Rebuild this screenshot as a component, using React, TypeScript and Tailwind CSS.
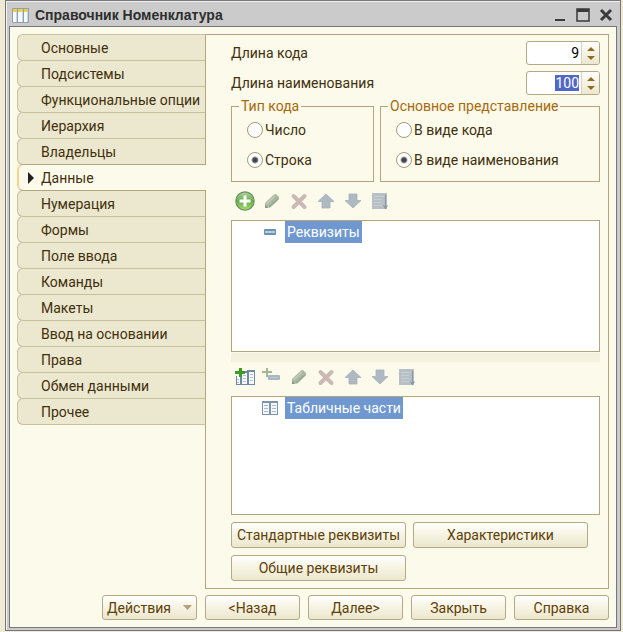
import React from "react";
import clsx from "clsx";

const tabs = [
    "Основные",
    "Подсистемы",
    "Функциональные опции",
    "Иерархия",
    "Владельцы",
    "Данные",
    "Нумерация",
    "Формы",
    "Поле ввода",
    "Команды",
    "Макеты",
    "Ввод на основании",
    "Права",
    "Обмен данными",
    "Прочее",
];

function WindowIcon() {
    return (
        <svg width="17" height="15" viewBox="0 0 17 15">
            <rect width="17" height="15" rx="1" fill="#8fa1ae" />
            <path d="M1 4h4v10H1zM6 4h5v10H6zM12 4h4v10h-4z" fill="#f7fafc" />
            <path d="M1 1h4v3H1zM6 1h5v3H6zM12 1h4v3h-4z" fill="#efcd4c" />
            <path d="M4 4h1v10H4zM10 4h1v10h-1zM15 4h1v10h-1z" fill="#c3dae6" />
        </svg>
    );
}

function AddIcon() {
    return (
        <svg width="20" height="20" viewBox="0 0 20 20">
            <defs>
                <linearGradient id="green" x1="0" y1="0" x2="0" y2="1">
                    <stop offset="0" stopColor="#b4d3a4" />
                    <stop offset="0.5" stopColor="#66ae4b" />
                    <stop offset="1" stopColor="#a4e070" />
                </linearGradient>
            </defs>
            <circle cx="10" cy="10" r="9.2" fill="url(#green)" stroke="#728f66" strokeWidth="1.2" />
            <path d="M8.5 4.5h3v4h4v3h-4v4h-3v-4h-4v-3h4z" fill="#fff" />
        </svg>
    );
}

function PencilIcon() {
    return (
        <svg width="20" height="20" viewBox="0 0 20 20">
            <path d="M3 17v-5l9-8.500 2-.5 3 3v2l-9 8.500z" fill="#a9b8a0" />
            <path d="M4.500 13l8.500-8" stroke="#c3cdbb" strokeWidth="1.5" />
            <path d="M7.500 16l8.500-8" stroke="#93a88b" strokeWidth="1.5" />
            <path d="M3 14v3h3z" fill="#8b9484" />
        </svg>
    );
}

function DeleteIcon() {
    return (
        <svg width="20" height="20" viewBox="0 0 20 20">
            <path d="M4.500 5l11 11M15.500 5l-11 11" stroke="#cbb9b5" strokeWidth="4" strokeLinecap="round" />
        </svg>
    );
}

function ArrowIcon({ down }: { down?: boolean }) {
    return (
        <svg width="20" height="20" viewBox="0 0 20 20" className={clsx(down && "rotate-180")}>
            <path d="M10 3l8 7.500h-4V17H6v-6.500H2z" fill="#aeb9c1" stroke="#a5b1ba" strokeWidth="0.8" strokeLinejoin="round" />
        </svg>
    );
}

function SortIcon() {
    return (
        <svg width="20" height="20" viewBox="0 0 20 20">
            <rect x="2" y="2" width="15" height="16" fill="#b7c0c6" />
            <path d="M4 5.500h10M4 8.500h8M4 11.500h8M4 14.500h8" stroke="#c7cdd0" />
            <path d="M15.500 4v13M13.500 14.500l2 3 2-3" stroke="#8c98a2" strokeWidth="1.200" fill="none" />
        </svg>
    );
}

function AddTableIcon() {
    return (
        <svg width="20" height="20" viewBox="0 0 20 20">
            <path d="M1 9h5v9H1zM6 4h7v14H6zM12 3h8v15h-8z" fill="#7089a8" />
            <path d="M2 9h3v8H2zM7 6h5v11H7zM14 5h5v12h-5z" fill="#f5f8fb" />
            <path d="M8 8.500h3M8 11.500h3M8 14.500h3M15 7.500h3M15 10.500h3M15 13.500h3M2 12.500h2M2 15.500h2" stroke="#b4c2d1" />
            <path d="M4 1h3v3h3v3H7v3H4V7H0V4h4z" fill="#3f9c26" />
        </svg>
    );
}

function AddFieldIcon() {
    return (
        <svg width="20" height="20" viewBox="0 0 20 20">
            <path d="M4 1h2v3h4v2H6v4H4V6H0V4h4z" fill="#a3b597" />
            <rect x="6" y="8" width="12" height="5" rx="1" fill="#a9b7c2" />
            <path d="M8 10.500h8" stroke="#bac6ce" />
        </svg>
    );
}

function FieldIcon() {
    return (
        <svg width="16" height="16" viewBox="0 0 16 16">
            <rect x="2" y="5" width="12" height="6" rx="1" fill="#6c93b3" />
            <rect x="3" y="7" width="10" height="2" fill="#b4d0e0" />
        </svg>
    );
}

function TableIcon() {
    return (
        <svg width="16" height="16" viewBox="0 0 16 16">
            <rect y="1" width="16" height="14" fill="#7f93ae" />
            <path d="M1 3h6v11H1zM9 3h6v11H9z" fill="#f4f7fb" />
            <path d="M2 5.500h4M2 8.500h4M2 11.500h4M10 5.500h4M10 8.500h4M10 11.500h4" stroke="#abb9c9" />
        </svg>
    );
}

const commonTools = [
    { label: "Изменить", icon: <PencilIcon /> },
    { label: "Удалить", icon: <DeleteIcon /> },
    { label: "Переместить вверх", icon: <ArrowIcon /> },
    { label: "Переместить вниз", icon: <ArrowIcon down /> },
    { label: "Упорядочить", icon: <SortIcon /> },
];

function Toolbar({ tools }: { tools: { label: string; icon: React.ReactNode }[] }) {
    return (
        <div className="flex h-5 gap-[7px] pl-1">
            {tools.map((tool) => (
                <button key={tool.label} type="button" aria-label={tool.label}>
                    {tool.icon}
                </button>
            ))}
        </div>
    );
}

function Button({ children, className }: { children: React.ReactNode; className?: string }) {
    return (
        <button
            type="button"
            className={clsx(
                "flex items-center justify-center rounded-[3px] border border-[#b3a986] bg-linear-to-b from-white via-[#f6f3e2] to-[#ebe7ce] text-[#5e4008]",
                className
            )}
        >
            {children}
        </button>
    );
}

function NumberField({ id, label, value, selected }: { id: string; label: string; value: string; selected?: boolean }) {
    return (
        <div className="flex h-6 items-center justify-between">
            <label htmlFor={id}>{label}</label>
            <div className="flex h-6 w-[74px] overflow-hidden rounded-[3px] border border-[#b3a986] bg-white">
                <div className="flex min-w-0 flex-1 items-center justify-end pr-[2px]">
                    <input
                        id={id}
                        type="text"
                        defaultValue={value}
                        className={clsx(
                            "h-4 min-w-0 text-right leading-4 outline-none",
                            selected ? "w-6 bg-[#5068c4] text-white" : "w-full text-black"
                        )}
                    />
                </div>
                <div className="flex w-[18px] flex-col items-center justify-center gap-[5px] border-l border-[#d9d3b8] bg-linear-to-b from-white to-[#ebe7ce]">
                    <button type="button" aria-label="Увеличить">
                        <svg width="8" height="4" viewBox="0 0 8 4" className="block">
                            <path d="M4 0l4 4H0z" fill="#8f6d1c" />
                        </svg>
                    </button>
                    <button type="button" aria-label="Уменьшить">
                        <svg width="8" height="4" viewBox="0 0 8 4" className="block">
                            <path d="M4 4L0 0h8z" fill="#8f6d1c" />
                        </svg>
                    </button>
                </div>
            </div>
        </div>
    );
}

function RadioGroup({
    name,
    title,
    options,
    selected,
    className,
}: {
    name: string;
    title: string;
    options: string[];
    selected: string;
    className: string;
}) {
    return (
        <fieldset className={clsx("h-[84px] border border-[#b3a67c] px-[7px] pb-[11px]", className)}>
            <legend className="px-[2px] leading-4 text-[#a8690c]">{title}</legend>
            <div className="flex flex-col gap-[14px] pt-2 pl-2">
                {options.map((option) => (
                    <label key={option} className="flex h-4 items-center gap-[2px]">
                        <input
                            type="radio"
                            name={name}
                            defaultChecked={option === selected}
                            className="size-4 appearance-none rounded-full border border-[#a39b78] bg-white checked:bg-[radial-gradient(circle,#444_0_2px,#fff_4px)]"
                        />
                        {option}
                    </label>
                ))}
            </div>
        </fieldset>
    );
}

function TreeBox({ icon, label, className }: { icon: React.ReactNode; label: string; className: string }) {
    return (
        <div className={clsx("border border-[#b3a67c] bg-white pl-[30px]", className)}>
            <div className="flex items-center gap-[7px]">
                {icon}
                <span className="h-[22px] bg-[#6f98d0] px-[2px] leading-[22px] text-white">{label}</span>
            </div>
        </div>
    );
}

function App() {
    return (
        <div className="flex min-h-screen bg-[#eeead4] pr-[2px] pb-px pl-[5px] font-['Roboto',sans-serif] text-[14px] leading-4 text-[#41300c]">
            <div className="flex flex-1 flex-col border border-[#77777b] bg-[#cbcbcb] px-[3px] pb-[2px] shadow-[inset_1px_1px_#f0f0f0]">
                <header className="flex h-[25px] items-center pt-[3px] pr-1 pl-[3px]">
                    <WindowIcon />
                    <h1 className="flex-1 pl-[6px] font-['Liberation_Sans',sans-serif] font-bold text-[#2e2e2e]">
                        Справочник Номенклатура
                    </h1>
                    <div className="flex gap-[9px]">
                        <button type="button" aria-label="Свернуть">
                            <svg width="14" height="14" viewBox="0 0 14 14">
                                <path d="M2 11h10v2H2z" fill="#3a3a3a" />
                            </svg>
                        </button>
                        <button type="button" aria-label="Развернуть">
                            <svg width="14" height="14" viewBox="0 0 14 14">
                                <path d="M1 1h12v12H1z" fill="none" stroke="#3a3a3a" strokeWidth="1.500" />
                                <path d="M1 1h12v3H1z" fill="#3a3a3a" />
                            </svg>
                        </button>
                        <button type="button" aria-label="Закрыть окно">
                            <svg width="14" height="14" viewBox="0 0 14 14">
                                <path d="M2 2l10 10M12 2L2 12" stroke="#3a3a3a" strokeWidth="3" />
                            </svg>
                        </button>
                    </div>
                </header>

                <main className="flex flex-1 flex-col border border-[#77777b] bg-[#fcfaeb] px-[7px] pt-[7px] pb-[7px]">
                    <div className="flex flex-1">
                        <nav className="z-10 -mr-px flex w-[189px] flex-col">
                            {tabs.map((tab) => {
                                const active = tab === "Данные";
                                return (
                                    <button
                                        key={tab}
                                        type="button"
                                        className={clsx(
                                            "-mb-px flex h-[27px] items-center rounded-l-md border text-left",
                                            active
                                                ? "z-10 border-y-[#b3a67c] border-r-0 border-l-2 border-l-[#f3d391] bg-[#fcfaeb] pl-2"
                                                : "border-[#c9c09d] border-r-[#b3a67c] bg-[#ece7cf] pl-[23px]"
                                        )}
                                    >
                                        {active && (
                                            <svg width="7" height="12" viewBox="0 0 7 12" className="mr-[7px]">
                                                <path d="M1 0l6 6-6 6z" fill="#222" />
                                            </svg>
                                        )}
                                        {tab}
                                    </button>
                                );
                            })}
                        </nav>

                        <section className="flex flex-1 flex-col border border-[#b3a67c] pt-[6px] pr-2 pb-[7px] pl-[25px]">
                            <div className="flex flex-col gap-[6px]">
                                <NumberField id="code-length" label="Длина кода" value="9" />
                                <NumberField id="name-length" label="Длина наименования" value="100" selected />
                            </div>
                            <div className="mt-[3px] flex gap-[6px]">
                                <RadioGroup
                                    name="code-type"
                                    title="Тип кода"
                                    options={["Число", "Строка"]}
                                    selected="Строка"
                                    className="w-[143px]"
                                />
                                <RadioGroup
                                    name="presentation"
                                    title="Основное представление"
                                    options={["В виде кода", "В виде наименования"]}
                                    selected="В виде наименования"
                                    className="flex-1"
                                />
                            </div>
                            <div className="mt-[9px]">
                                <Toolbar tools={[{ label: "Добавить", icon: <AddIcon /> }, ...commonTools]} />
                            </div>
                            <TreeBox icon={<FieldIcon />} label="Реквизиты" className="mt-[9px] h-[132px]" />
                            <div className="mt-px h-[9px] bg-[#f4f1df]" />
                            <div className="mt-[5px]">
                                <Toolbar
                                    tools={[
                                        { label: "Добавить табличную часть", icon: <AddTableIcon /> },
                                        { label: "Добавить реквизит", icon: <AddFieldIcon /> },
                                        ...commonTools,
                                    ]}
                                />
                            </div>
                            <TreeBox icon={<TableIcon />} label="Табличные части" className="mt-[9px] min-h-[119px] flex-1" />
                            <div className="mt-[7px] grid grid-cols-[175px_175px] gap-[7px]">
                                <Button className="h-[26px]">Стандартные реквизиты</Button>
                                <Button className="h-[26px]">Характеристики</Button>
                                <Button className="h-[26px]">Общие реквизиты</Button>
                            </div>
                        </section>
                    </div>

                    <footer className="mt-[6px] flex justify-end gap-2">
                        <Button className="h-[25px] w-[95px] gap-3">
                            Действия
                            <svg width="9" height="5" viewBox="0 0 9 5">
                                <path d="M0 0h9L4.500 5z" fill="#b79f7c" />
                            </svg>
                        </Button>
                        <Button className="h-[25px] w-[95px]">&lt;Назад</Button>
                        <Button className="h-[25px] w-[95px]">Далее&gt;</Button>
                        <Button className="h-[25px] w-[95px]">Закрыть</Button>
                        <Button className="h-[25px] w-[95px]">Справка</Button>
                    </footer>
                </main>
            </div>
        </div>
    );
}

export default App;
